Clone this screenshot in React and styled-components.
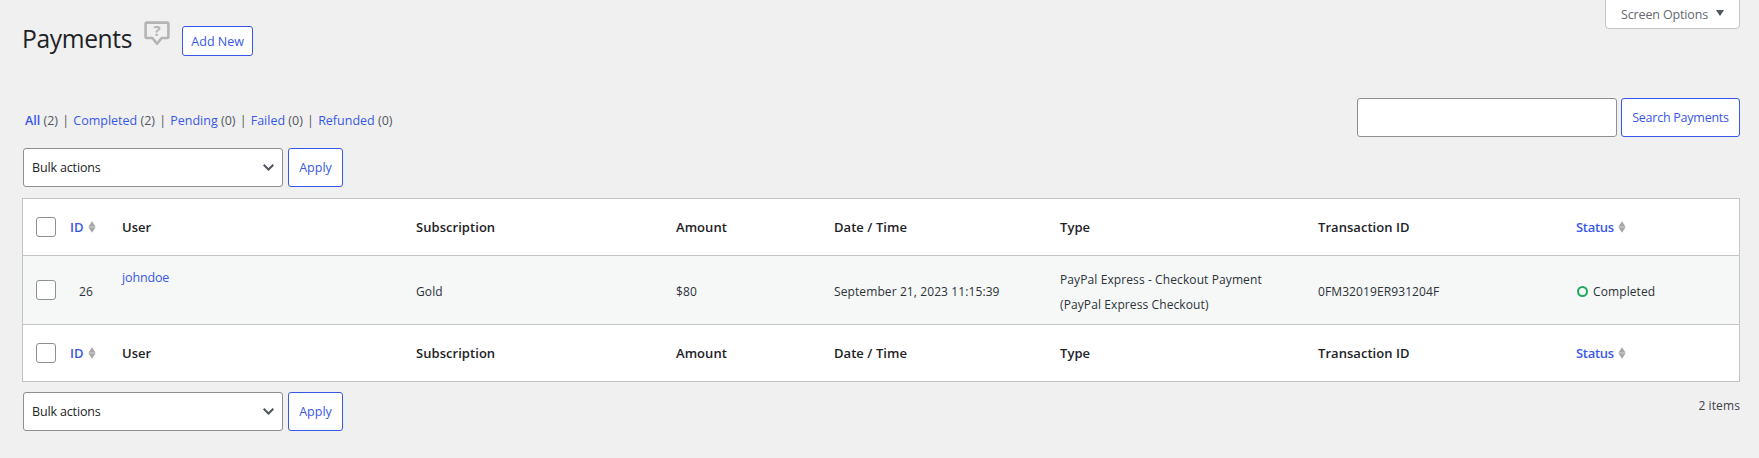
import React from 'react';
import styled, { createGlobalStyle } from 'styled-components';

const Global = createGlobalStyle`
  html, body { margin: 0; padding: 0; height: 458px; overflow: hidden; background: #f0f0f0; }
  body { font-family: "Open Sans", "Noto Sans", sans-serif; font-size: 13px; color: #1d2327; }
  * { box-sizing: border-box; }
`;
const Page = styled.div`
  height: 458px;
  overflow: hidden;
  padding: 0 19px 0 22px;
`;
const Header = styled.header`
  display: flex;
  justify-content: space-between;
  align-items: flex-start;
  height: 98px;
`;
const TitleGroup = styled.div`
  display: flex;
  align-items: flex-start;
  padding-top: 22px;
`;
const Title = styled.h1`
  margin: 0;
  font-size: 24.6px;
  font-weight: 400;
  line-height: 34px;
  letter-spacing: -0.35px;
  color: #1d2327;
`;
const HelpIcon = styled.svg`
  display: block;
  width: 26px;
  height: 26px;
  margin: -1px 12px 0 12px;
`;
const OutlineButton = styled.button`
  width: ${p => p.$w}px;
  height: ${p => p.$h || 39}px;
  padding: 0;
  border: 1px solid #3858e9;
  border-radius: 3px;
  background: #fff;
  color: #3858e9;
  font: 400 12.5px "Open Sans", "Noto Sans", sans-serif;
  white-space: nowrap;
  cursor: pointer;
`;
const AddNew = styled(OutlineButton)`
  margin-top: 4px;
`;
const SearchButton = styled(OutlineButton)`
  letter-spacing: -0.25px;
`;
const ScreenOptions = styled.button`
  display: flex;
  align-items: center;
  justify-content: center;
  gap: 8px;
  width: 135px;
  height: 30px;
  margin-top: -1px;
  border: 1px solid #c3c4c7;
  border-radius: 0 0 4px 4px;
  background: #fff;
  color: #646970;
  font: 400 12.5px "Open Sans", "Noto Sans", sans-serif;
  letter-spacing: -0.15px;
`;
const Caret = styled.span`
  width: 0;
  height: 0;
  margin-top: -2px;
  border-left: 4.5px solid transparent;
  border-right: 4.5px solid transparent;
  border-top: 6px solid #50575e;
`;
const FilterRow = styled.div`
  display: flex;
  justify-content: space-between;
  align-items: flex-start;
  height: 50px;
`;
const Filters = styled.ul`
  display: flex;
  margin: 13px 0 0 3px;
  padding: 0;
  list-style: none;
  font-size: 12.5px;
  line-height: 20px;
  color: #50575e;
`;
const FilterItem = styled.li`
  white-space: pre;
  &:not(:last-child)::after { content: "|"; color: #50575e; margin: 0 4.2px; }
`;
const Link = styled.a`
  color: #3858e9;
  text-decoration: none;
  font-weight: ${p => (p.$strong ? 600 : 400)};
`;
const Search = styled.div`
  display: flex;
  gap: 4px;
`;
const SearchInput = styled.input`
  width: 260px;
  height: 39px;
  border: 1px solid #8c8f94;
  border-radius: 3px;
  background: #fff;
`;
const Toolbar = styled.div`
  display: flex;
  justify-content: space-between;
  align-items: center;
  padding-left: 1px;
  margin: ${p => p.$m};
`;
const ToolbarGroup = styled.div`
  display: flex;
  gap: 5px;
`;
const chevron = "data:image/svg+xml;utf8,<svg xmlns='http://www.w3.org/2000/svg' width='11' height='7' viewBox='0 0 11 7'><path d='M.7.7l4.8 4.8L10.3.7' fill='none' stroke='%2350575e' stroke-width='2'/></svg>";
const BulkSelect = styled.select`
  appearance: none;
  width: 260px;
  height: 39px;
  padding: 0 24px 0 8px;
  border: 1px solid #8c8f94;
  border-radius: 3px;
  background: #fff url("${chevron}") no-repeat right 8px center;
  color: #1d2327;
  font: 400 12.5px "Open Sans", "Noto Sans", sans-serif;
  letter-spacing: -0.15px;
`;
const Table = styled.table`
  width: 100%;
  table-layout: fixed;
  border-collapse: separate;
  border-spacing: 0;
  background: #fff;
  border: 1px solid #c3c4c7;
`;
const HeadRow = styled.tr`
  height: 57px;
`;
const Th = styled.th`
  padding: 0 10px;
  text-align: left;
  font-weight: 600;
  font-size: 13px;
  letter-spacing: 0.05px;
  color: #1d2327;
  ${p => p.$top && 'border-top: 1px solid #c3c4c7;'}
  ${p => p.$bottom && 'border-bottom: 1px solid #c3c4c7;'}
`;
const CheckCell = styled.th`
  padding: 0 0 0 13px;
  text-align: left;
  ${p => p.$top && 'border-top: 1px solid #c3c4c7;'}
  ${p => p.$bottom && 'border-bottom: 1px solid #c3c4c7;'}
`;
const Check = styled.input.attrs({ type: 'checkbox' })`
  appearance: none;
  display: block;
  width: 20px;
  height: 20px;
  margin: 0;
  border: 1px solid #8c8f94;
  border-radius: 3px;
  background: #fff;
`;
const SortLink = styled.a`
  display: inline-flex;
  align-items: center;
  gap: 4px;
  color: #3858e9;
  text-decoration: none;
  letter-spacing: ${p => (p.$tight ? '-0.3px' : '0.05px')};
`;
const SortIcon = styled.svg`
  width: 8px;
  height: 12px;
  display: block;
`;
const BodyRow = styled.tr`
  height: 68px;
  background: #f6f7f7;
`;
const Td = styled.td`
  padding: 3px 10px 0;
  font-size: 12px;
  letter-spacing: 0.1px;
  line-height: 25px;
  color: #2c3338;
  vertical-align: middle;
`;
const IdCell = styled(Td)`
  text-align: center;
`;
const UserCell = styled(Td)`
  vertical-align: top;
  padding-top: 12px;
  line-height: 20px;
  font-size: 12.5px;
  letter-spacing: -0.15px;
`;
const Status = styled.span`
  display: inline-flex;
  align-items: center;
  gap: 5px;
  padding-left: 1px;
`;
const StatusDot = styled.span`
  width: 11px;
  height: 11px;
  border: 2.5px solid #1fa85f;
  border-radius: 50%;
`;
const Count = styled.span`
  font-size: 12px;
  letter-spacing: 0.1px;
  color: #3c434a;
  margin-top: -13px;
`;

const Sort = () => (
  <SortIcon viewBox="0 0 8 12"><path d="M4 .2l3.6 5.6H.4zM4 11.8L.4 6.2h7.2z" fill="#a7a7a7" /></SortIcon>
);
const Help = () => (
  <HelpIcon viewBox="0 0 26 26">
    <path d="M2.6 1.6h20.8a1 1 0 0 1 1 1v13.4a1 1 0 0 1-1 1h-5.8L13 22.8 8.4 17H2.6a1 1 0 0 1-1-1V2.6a1 1 0 0 1 1-1z" fill="none" stroke="#b4b4b4" strokeWidth="2.6" strokeLinejoin="round" />
    <text x="13" y="15" textAnchor="middle" fontSize="15" fontWeight="700" fontFamily="Open Sans, sans-serif" fill="#b4b4b4">?</text>
  </HelpIcon>
);

const filters = [
  ['All', 2, true], ['Completed', 2], ['Pending', 0], ['Failed', 0], ['Refunded', 0],
];
const Colgroup = () => (
  <colgroup>
    {[37, 52, 294, 260, 158, 226, 258, 258, 173].map((w, i) => <col key={i} style={{ width: w }} />)}
  </colgroup>
);
const Heads = ({ top, bottom }) => (
  <HeadRow>
    <CheckCell $top={top} $bottom={bottom}><Check /></CheckCell>
    <Th $top={top} $bottom={bottom}><SortLink href="#">ID <Sort /></SortLink></Th>
    {['User', 'Subscription', 'Amount', 'Date / Time', 'Type', 'Transaction ID'].map(t => (
      <Th key={t} $top={top} $bottom={bottom}>{t}</Th>
    ))}
    <Th $top={top} $bottom={bottom}><SortLink href="#" $tight>Status <Sort /></SortLink></Th>
  </HeadRow>
);
const Bulk = () => (
  <ToolbarGroup>
    <BulkSelect defaultValue="bulk"><option value="bulk">Bulk actions</option></BulkSelect>
    <OutlineButton $w={55}>Apply</OutlineButton>
  </ToolbarGroup>
);

export default function App() {
  return (
    <Page>
      <Global />
      <Header>
        <TitleGroup>
          <Title>Payments</Title>
          <Help />
          <AddNew $w={71} $h={30}>Add New</AddNew>
        </TitleGroup>
        <ScreenOptions>Screen Options <Caret /></ScreenOptions>
      </Header>
      <FilterRow>
        <Filters>
          {filters.map(([l, c, s]) => (
            <FilterItem key={l}><Link href="#" $strong={s}>{l}</Link> ({c})</FilterItem>
          ))}
        </Filters>
        <Search>
          <SearchInput />
          <SearchButton $w={119}>Search Payments</SearchButton>
        </Search>
      </FilterRow>
      <Toolbar $m="0 0 11px"><Bulk /></Toolbar>
      <Table>
        <Colgroup />
        <thead><Heads bottom /></thead>
        <tbody>
          <BodyRow>
            <CheckCell><Check /></CheckCell>
            <IdCell>26</IdCell>
            <UserCell><Link href="#">johndoe</Link></UserCell>
            <Td>Gold</Td>
            <Td>$80</Td>
            <Td>September 21, 2023 11:15:39</Td>
            <Td>PayPal Express - Checkout Payment<br />(PayPal Express Checkout)</Td>
            <Td>0FM32019ER931204F</Td>
            <Td><Status><StatusDot />Completed</Status></Td>
          </BodyRow>
        </tbody>
        <tfoot><Heads top /></tfoot>
      </Table>
      <Toolbar $m="10px 0 0">
        <Bulk />
        <Count>2 items</Count>
      </Toolbar>
    </Page>
  );
}
